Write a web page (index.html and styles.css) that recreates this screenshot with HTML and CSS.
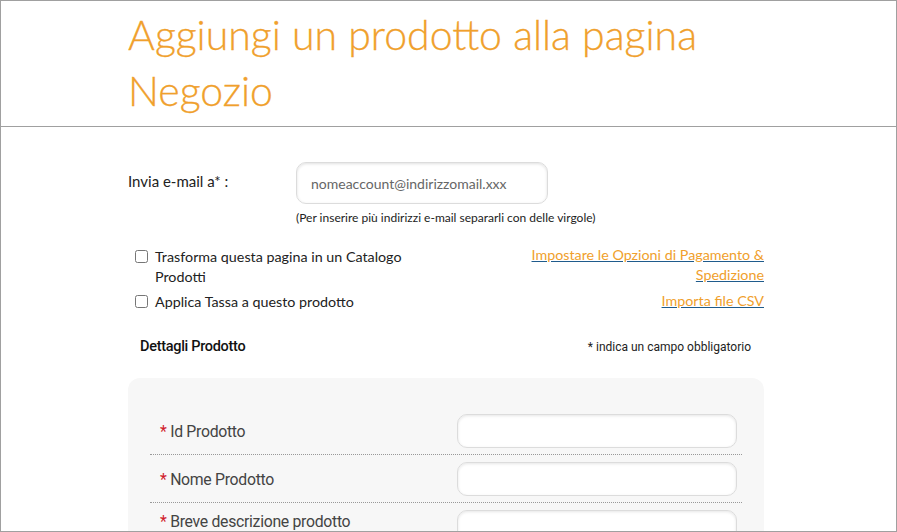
FILE: index.html
```html
<!DOCTYPE html>
<html lang="it">
<head>
    <meta charset="UTF-8">
    <meta name="viewport" content="width=device-width, initial-scale=1.0">
    <title>Aggiungi un prodotto</title>
    <link rel="stylesheet" href="styles.css">
</head>
<body>
    <div class="frame">
        <div class="header">
            <h1>Aggiungi un prodotto alla pagina<br>Negozio</h1>
        </div>
        <div class="content">
            <div class="email-row">
                <label class="email-label" for="email">Invia e-mail a* :</label>
                <div class="email-field">
                    <input type="text" id="email" placeholder="nomeaccount@indirizzomail.xxx">
                    <div class="hint">(Per inserire più indirizzi e-mail separarli con delle virgole)</div>
                </div>
            </div>

            <div class="options">
                <div class="checks">
                    <label class="check"><input type="checkbox"><span>Trasforma questa pagina in un Catalogo Prodotti</span></label>
                    <label class="check"><input type="checkbox"><span>Applica Tassa a questo prodotto</span></label>
                </div>
                <div class="links">
                    <a href="#" class="link-pay">Impostare le Opzioni di Pagamento &amp; Spedizione</a>
                    <a href="#" class="link-csv">Importa file CSV</a>
                </div>
            </div>

            <div class="details-head">
                <div class="details-title">Dettagli Prodotto</div>
                <div class="required-note">* indica un campo obbligatorio</div>
            </div>

            <div class="panel">
                <div class="row">
                    <div class="row-label"><span class="star">*</span> Id Prodotto</div>
                    <input type="text" class="row-input">
                </div>
                <div class="row">
                    <div class="row-label"><span class="star">*</span> Nome Prodotto</div>
                    <input type="text" class="row-input">
                </div>
                <div class="row row-tall">
                    <div class="row-label"><span class="star">*</span> Breve descrizione prodotto</div>
                    <textarea class="row-input row-area"></textarea>
                </div>
            </div>
        </div>
    </div>
</body>
</html>
```

FILE: styles.css
```css
body {
    margin: 0;
    font-family: 'Lato', sans-serif;
    color: #222;
    background-color: #fff;
}
.frame {
    height: 532px;
    box-sizing: border-box;
    border: 1px solid #a0a0a0;
    overflow: hidden;
}
.header {
    height: 126px;
    border-bottom: 1px solid #a0a0a0;
    padding-left: 127px;
    box-sizing: border-box;
}
h1 {
    margin: 0;
    padding-top: 6px;
    font-family: 'Lato', sans-serif;
    font-weight: 300;
    font-size: 41px;
    line-height: 56px;
    color: #f0a02c;
    -webkit-text-stroke: 0.3px #f0a02c;
}
.content {
    width: 636px;
    margin-left: 127px;
}
.email-row {
    display: flex;
    padding-top: 35px;
}
.email-label {
    width: 168px;
    padding-top: 10px;
    font-size: 15px;
    color: #222;
}
.email-field input {
    width: 252px;
    height: 42px;
    box-sizing: border-box;
    padding: 0 14px;
    border: 1px solid #dcdcdc;
    border-radius: 10px;
    box-shadow: inset 0 1px 3px rgba(0,0,0,0.12);
    font-family: 'Lato', sans-serif;
    font-size: 14px;
    outline: none;
}
.email-field input::placeholder {
    color: #666;
}
.hint {
    margin-top: 6px;
    font-size: 12px;
    color: #222;
}
.options {
    display: flex;
    justify-content: space-between;
    margin-top: 22px;
}
.checks {
    width: 290px;
    display: flex;
    flex-direction: column;
    gap: 5px;
}
.check {
    display: flex;
    align-items: flex-start;
    font-size: 14.3px;
    line-height: 20px;
    color: #222;
}
.check input {
    width: 13px;
    height: 13px;
    margin: 3px 7px 0 7px;
    flex-shrink: 0;
}
.links {
    width: 250px;
    display: flex;
    flex-direction: column;
    align-items: flex-end;
    text-align: right;
    gap: 6px;
    margin-top: -2px;
}
.links a {
    font-size: 14.3px;
    line-height: 20px;
    color: #f0a02c;
    text-decoration: underline;
    text-decoration-color: #1f5b8c;
}
.details-head {
    display: flex;
    justify-content: space-between;
    align-items: baseline;
    padding: 26px 13px 0 12px;
}
.details-title {
    font-family: 'Roboto', sans-serif;
    font-size: 14.5px;
    font-weight: 500;
    letter-spacing: -0.3px;
    color: #111;
}
.required-note {
    font-family: 'Roboto', sans-serif;
    font-size: 12px;
    color: #222;
}
.panel {
    margin-top: 23px;
    background-color: #f7f7f7;
    border-radius: 12px;
    padding: 36px 22px 0 22px;
    height: 200px;
}
.row {
    display: flex;
    justify-content: space-between;
    align-items: center;
    padding: 0 5px 6px 10px;
    margin-bottom: 7px;
    border-bottom: 1px dotted #999;
}
.row-tall {
    align-items: flex-start;
}
.row-tall .row-label {
    padding-top: 2px;
}
.row-label {
    font-family: 'Roboto', sans-serif;
    font-size: 15.8px;
    letter-spacing: -0.3px;
    color: #444;
}
.star {
    color: #d0202a;
}
.row-input {
    width: 280px;
    height: 34px;
    box-sizing: border-box;
    border: 1px solid #dcdcdc;
    border-radius: 10px;
    box-shadow: inset 0 1px 3px rgba(0,0,0,0.1);
    background-color: #fff;
    outline: none;
}
.row-area {
    height: 60px;
    resize: none;
}
```
